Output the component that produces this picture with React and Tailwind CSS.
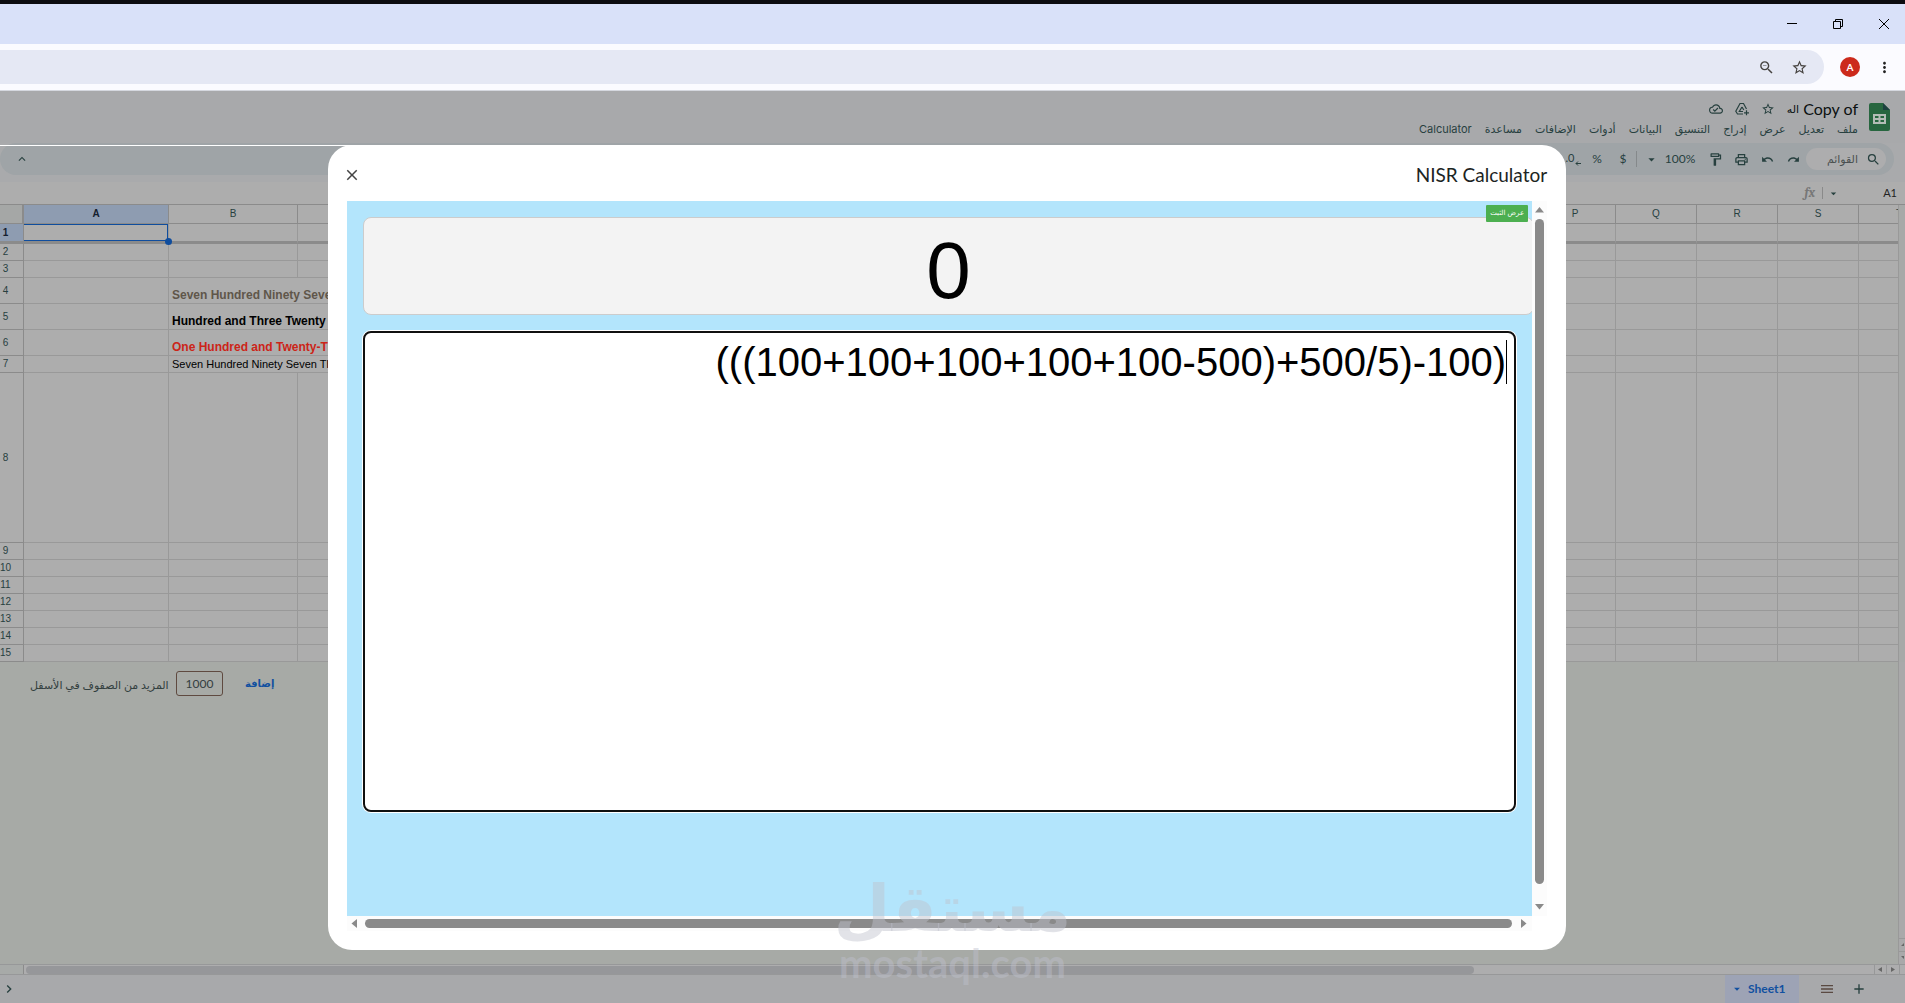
import { MdZoomOut, MdStarBorder, MdOutlineCloudDone, MdSearch, MdRedo, MdUndo, MdOutlinePrint, MdOutlineFormatPaint, MdMoreVert, MdArrowDropDown, MdAdd, MdMenu, MdClose, MdKeyboardArrowUp, MdKeyboardArrowRight } from "react-icons/md";

const MENUS = ["ملف", "تعديل", "عرض", "إدراج", "التنسيق", "البيانات", "أدوات", "الإضافات", "مساعدة", "Calculator"];
const COLUMNS = ["A", "B", "C", "D", "E", "F", "G", "H", "I", "J", "K", "L", "M", "N", "O", "P", "Q", "R", "S", "T"];

const COLUMN_WIDTHS = { A: "w-[145px]", B: "w-[129px]", C: "" };

const ROWS = [
    { id: 1, height: "h-5" },
    { id: 2, height: "h-[17px]" },
    { id: 3, height: "h-[17px]" },
    { id: 4, height: "h-[26px]", text: "Seven Hundred Ninety Seven Thousand", style: "text-[12px] font-bold text-[#5f564a]" },
    { id: 5, height: "h-[26px]", text: "Hundred and Three Twenty Million", style: "text-[12px] font-bold text-black" },
    { id: 6, height: "h-[26px]", text: "One Hundred and Twenty-Three", style: "text-[12px] font-bold text-[#cc2418]" },
    { id: 7, height: "h-[17px]", text: "Seven Hundred Ninety Seven Thousand", style: "text-[11px] text-black" },
    { id: 8, height: "h-[170px]" },
    { id: 9, height: "h-[17px]" },
    { id: 10, height: "h-[17px]" },
    { id: 11, height: "h-[17px]" },
    { id: 12, height: "h-[17px]" },
    { id: 13, height: "h-[17px]" },
    { id: 14, height: "h-[17px]" },
    { id: 15, height: "h-[17px]" },
];

function BrowserBar() {
    return (
        <div className="border-t-4 border-[#0c0c10]">
            <div className="flex h-10 items-center justify-end gap-9 bg-[#d9e1f9] pr-4 text-black">
                <button aria-label="Minimize">
                    <svg width="10" height="10" viewBox="0 0 10 10" stroke="currentColor" fill="none"><path d="M0 4.5h10" /></svg>
                </button>
                <button aria-label="Restore">
                    <svg width="10" height="10" viewBox="0 0 10 10" stroke="currentColor" fill="none"><path d="M.5 2.5h7v7h-7zM2.5 2.5v-2h7v7h-2" /></svg>
                </button>
                <button aria-label="Close window">
                    <svg width="10" height="10" viewBox="0 0 10 10" stroke="currentColor" fill="none"><path d="M0 0l10 10M10 0L0 10" /></svg>
                </button>
            </div>
            <div className="flex h-[47px] items-center border-b border-[#d5d8df] bg-[#fbfbff] pr-3 text-[#45423f]">
                <div className="flex h-[34px] flex-1 items-center justify-end gap-4 rounded-r-full bg-[#e5e8f4] pr-4">
                    <button aria-label="Zoom"><MdZoomOut size={17} /></button>
                    <button aria-label="Bookmark"><MdStarBorder size={17} /></button>
                </div>
                <button aria-label="Profile" className="ml-4 h-5 w-5 rounded-full bg-[#cc2a1c] text-[10px] font-bold text-white">A</button>
                <button aria-label="More" className="ml-4 text-[#222]"><MdMoreVert size={17} /></button>
            </div>
        </div>
    );
}

function SheetsHeader() {
    return (
        <header dir="rtl" className="flex h-[52px] gap-[11px] bg-[#a8a9ab] pt-3 pr-[15px] text-[#27403f]">
            <svg width="21" height="28" viewBox="0 0 21 28">
                <path d="M2 0h12l7 7v19a2 2 0 0 1-2 2H2a2 2 0 0 1-2-2V2a2 2 0 0 1 2-2z" fill="#27663f" />
                <path d="M14 0l7 7h-7z" fill="#1d4040" />
                <path d="M4 11h13v10H4zM6 13v2h3.500v-2zM11.500 13v2H15v-2zM6 17v2h3.500v-2zM11.500 17v2H15v-2z" fill="#b4bcb6" fillRule="evenodd" />
            </svg>
            <div className="-mt-1 flex-1">
                <div className="flex h-5 items-center gap-3">
                    <h1 className="flex gap-1 text-[16px] leading-5 text-[#0b1010]" dir="ltr">
                        <span className="text-[11px]">اله</span>
                        <span>Copy of</span>
                    </h1>
                    <button aria-label="Star"><MdStarBorder size={14} /></button>
                    <button aria-label="Move">
                        <svg width="14" height="14" viewBox="0 0 14 14" fill="none" stroke="currentColor" strokeWidth="1.200">
                            <path d="M8 12H2.500L.8 9.200 5 1.500h3.500l3 5.500M7 5L4.300 9.500H8M7 5l1.800 3M9 10.800h5M11.500 8.300v5" />
                        </svg>
                    </button>
                    <button aria-label="Saved"><MdOutlineCloudDone size={14} /></button>
                </div>
                <nav className="flex h-5 items-center gap-[13px] font-['Inter','DejaVu_Sans',sans-serif] text-[11px]">
                    {MENUS.map((item) => (
                        <button key={item}>{item}</button>
                    ))}
                </nav>
            </div>
        </header>
    );
}

function ToolButton({ label, children }) {
    return (
        <button aria-label={label} className="flex w-[26px] justify-center text-[12px]">
            {children}
        </button>
    );
}

function Toolbar() {
    return (
        <div className="bg-[#a9aaac] pb-[7px]">
            <div dir="rtl" className="mr-[11px] flex h-8 items-center rounded-full bg-[#9fa4a7] pr-2 text-[#27403f]">
                <label className="flex h-[22px] w-20 items-center gap-2 rounded-full bg-[#adadae] pr-[5px]">
                    <MdSearch size={15} className="shrink-0" />
                    <input aria-label="القوائم" className="w-12 min-w-0 bg-transparent text-[11px] placeholder:text-[#4a5050] placeholder:opacity-100" placeholder="القوائم" />
                </label>
                <ToolButton label="Redo"><MdRedo size={13} /></ToolButton>
                <ToolButton label="Undo"><MdUndo size={13} /></ToolButton>
                <ToolButton label="Print"><MdOutlinePrint size={15} /></ToolButton>
                <ToolButton label="Paint format"><MdOutlineFormatPaint size={15} /></ToolButton>
                <button className="flex w-[65px] items-center justify-center gap-[6px] text-[12px]">
                    <span dir="ltr">100%</span>
                    <MdArrowDropDown size={15} />
                </button>
                <span className="h-4 w-px bg-[#85898b]"></span>
                <ToolButton label="Currency">$</ToolButton>
                <ToolButton label="Percent">%</ToolButton>
                <ToolButton label="Fewer decimals">
                    <span dir="ltr" className="text-[11px] leading-3">.0</span>
                    <svg width="6" height="14" viewBox="0 0 6 14" className="-mr-1 order-first" stroke="currentColor" fill="none"><path d="M6 11.500H1M3 9.500l-2 2 2 2" /></svg>
                </ToolButton>
                <button aria-label="Collapse" className="mr-auto ml-[15px]"><MdKeyboardArrowUp size={14} /></button>
            </div>
        </div>
    );
}

function FormulaBar() {
    return (
        <div dir="rtl" className="flex h-[22px] items-center bg-[#adadad] pr-2 text-[11px]">
            <span className="w-[57px] text-[#222]">A1</span>
            <MdArrowDropDown size={13} className="text-[#27403f]" />
            <span className="mr-1 h-3 w-px bg-[#8a8a8a]"></span>
            <em className="mr-[7px] font-serif text-[13px] font-bold text-[#777]">fx</em>
        </div>
    );
}

function Grid() {
    return (
        <div className="flex border-t border-[#8b8b8b]">
            <div className="min-w-0 flex-1 overflow-hidden border-r border-[#999]">
                <table className="w-[calc(100%+42px)] table-fixed border-separate border-spacing-0 bg-[#adadad] font-['Liberation_Sans',Arial,sans-serif] text-[10px] leading-3 text-[#27403f]">
                    <colgroup>
                        <col className="w-6" />
                        {COLUMNS.map((name) => (
                            <col key={name} className={COLUMN_WIDTHS[name] ?? "w-[81px]"} />
                        ))}
                    </colgroup>
                    <thead>
                        <tr className="h-[19px]">
                            <th aria-label="Select all" className="border-r-2 border-b border-[#8b8b8b] bg-[#a5a7a6] p-0"></th>
                            {COLUMNS.map((name) => (
                                <th
                                    key={name}
                                    className={`border-r border-b border-[#8b8b8b] p-0 ${name === "A" ? "bg-[#8e9cb1] font-bold text-[#15202e]" : "font-normal"}`}
                                >
                                    {name}
                                </th>
                            ))}
                        </tr>
                    </thead>
                    <tbody>
                        {ROWS.map((row) => (
                            <tr key={row.id} className={row.height}>
                                <th
                                    className={`border-r border-[#8b8b8b] p-0 pr-3 ${row.id === 1 ? "border-b-3 bg-[#8e9cb1] font-bold text-[#15202e]" : "border-b font-normal"}`}
                                >
                                    {row.id}
                                </th>
                                {COLUMNS.map((name) => {
                                    if (row.id === 1) {
                                        return (
                                            <td key={name} className={`border-r border-b-3 border-r-[#999] border-b-[#8b8b8b] p-0 ${name === "A" ? "relative" : ""}`}>
                                                {name === "A" && (
                                                    <>
                                                        <span className="absolute inset-0 border border-l-0 border-[#0f4d9e]"></span>
                                                        <span className="absolute -right-1 -bottom-1 z-10 h-[7px] w-[7px] rounded-full bg-[#0f4d9e]"></span>
                                                    </>
                                                )}
                                            </td>
                                        );
                                    }
                                    if (name === "B" && row.text) {
                                        return (
                                            <td key={name} className={`border-b border-[#999] p-0 pl-[3px] align-bottom whitespace-nowrap ${row.style}`}>
                                                <div className="w-0 leading-4">{row.text}</div>
                                            </td>
                                        );
                                    }
                                    return <td key={name} className="border-r border-b border-[#999] p-0"></td>;
                                })}
                            </tr>
                        ))}
                    </tbody>
                </table>
            </div>
            <div className="w-[6px] bg-[#a7a9a8]"></div>
        </div>
    );
}

function AddRows() {
    return (
        <div className="flex flex-1">
            <div className="flex-1 border-r border-[#999] pt-[9px] pl-[30px]">
                <div className="flex h-[25px] items-center text-[11px] text-[#33403f]">
                    <label htmlFor="row-count" dir="rtl" className="w-[146px] pt-1 pr-1 text-left">المزيد من الصفوف في الأسفل</label>
                    <input id="row-count" defaultValue="1000" className="h-[25px] w-[47px] rounded-[3px] border border-[#5f4a40] text-center text-[12px]" />
                    <button className="ml-[22px] text-[10px] font-bold text-[#1150a0]">إضافة</button>
                </div>
            </div>
            <div className="flex w-[6px] flex-col justify-end bg-[#a9a9aa] text-[#666]">
                <svg width="6" height="26" viewBox="0 0 6 26"><path d="M0 .5h6M0 13.500h6" stroke="#999" /><path d="M2 8l3-3v3zM2 18h3v3z" fill="currentColor" /></svg>
            </div>
        </div>
    );
}

function SheetTabs() {
    return (
        <footer>
            <div className="flex h-[11px] items-center border-y border-[#979899] bg-[#adadae]">
                <span className="h-full w-6 border-r border-[#8b8b8b] bg-[#a7aaa8]"></span>
                <span className="ml-[2px] h-[8px] w-[76%] rounded-full bg-[#96979a]"></span>
                <svg width="32" height="9" viewBox="0 0 32 9" className="ml-auto"><path d="M1.500 0v9M13.500 0v9M26.500 0v9" stroke="#979899" /><path d="M9 2v5L5 4.500zM18 2v5l4-2.500z" fill="#666" /></svg>
            </div>
            <div dir="rtl" className="flex h-7 items-center bg-[#a8a9ab] pr-[38px] text-[#27403f]">
                <button aria-label="Add sheet"><MdAdd size={16} /></button>
                <button aria-label="All sheets" className="mr-4 ml-5 text-[#5a4a42]"><MdMenu size={16} /></button>
                <button dir="ltr" className="flex h-full w-[74px] items-center gap-1 bg-[#9da3b5] pl-[5px] text-[12px] font-bold text-[#1150a0]">
                    <MdArrowDropDown size={14} />
                    Sheet1
                </button>
                <button aria-label="Scroll tabs" className="mr-auto ml-[1px]"><MdKeyboardArrowRight size={16} /></button>
            </div>
        </footer>
    );
}

function CalculatorDialog() {
    return (
        <div role="dialog" aria-label="NISR Calculator" className="relative flex w-[65vw] flex-col rounded-3xl bg-white px-[19px] pb-[19px]">
            <div className="flex h-14 items-center justify-between pt-1">
                <button aria-label="Close" className="text-[#444]"><MdClose size={18} className="-ml-1" /></button>
                <h2 className="text-[19px] text-[#1c2423]">NISR Calculator</h2>
            </div>
            <div className="flex min-h-0 flex-1">
                <div className="relative min-w-0 flex-1 overflow-hidden bg-[#b3e5fc] pt-4 pl-4 font-['Liberation_Sans',Arial,sans-serif] text-black">
                    <output className="-mr-[2px] flex h-[98px] items-center justify-center rounded-lg border border-[#ccc] bg-[#f3f3f3] text-[80px] leading-none">
                        <span className="pt-[10px]">0</span>
                    </output>
                    <div className="relative mt-4 mr-4 flex h-[481px]">
                        <textarea
                            aria-label="Expression"
                            dir="ltr"
                            className="w-full resize-none rounded-lg border-2 border-[#101010] bg-white pt-[6px] pr-[8px] text-right text-[40px] leading-[46px] ring-1 ring-white outline-none"
                            defaultValue="(((100+100+100+100+100-500)+500/5)-100)"
                        />
                        <span className="absolute top-[9px] right-[9px] h-11 w-px bg-black"></span>
                    </div>
                    <button className="absolute top-1 right-1 h-[17px] w-[42px] rounded-[1px] bg-[#4caf50] font-['DejaVu_Sans',sans-serif] text-[7px] leading-none whitespace-nowrap text-white">عرض الثبت</button>
                </div>
                <div className="flex w-[15px] flex-col items-center bg-[#fcfcfc] text-[#8a8a8a]">
                    <svg width="9" height="18" viewBox="0 0 9 18"><path d="M0 11.500L4.500 6 9 11.500z" fill="currentColor" /></svg>
                    <div className="w-[9px] flex-1 rounded-full bg-current"></div>
                    <svg width="9" height="32" viewBox="0 0 9 32"><path d="M0 20l4.500 5.500L9 20z" fill="currentColor" /></svg>
                </div>
            </div>
            <div className="mr-[15px] flex h-[15px] items-center bg-[#fcfcfc] text-[#8a8a8a]">
                <svg width="18" height="9" viewBox="0 0 18 9"><path d="M10 0v9L4.500 4.500z" fill="currentColor" /></svg>
                <div className="h-[9px] flex-1 rounded-full bg-current"></div>
                <svg width="20" height="9" viewBox="0 0 20 9"><path d="M9 0v9l5.500-4.500z" fill="currentColor" /></svg>
            </div>
        </div>
    );
}

function Watermark() {
    return (
        <div className="pointer-events-none absolute inset-x-0 bottom-6 flex flex-col items-center font-['DejaVu_Sans',sans-serif] font-bold text-[#bec0cd]/45">
            <span className="text-[65px] leading-[76px]">مستقل</span>
            <span className="font-['Lato',sans-serif] text-[40px] leading-8">mostaql.com</span>
        </div>
    );
}

export default function App() {
    return (
        <div className="relative flex min-h-screen flex-col bg-[#a7aaa6] font-['Lato','DejaVu_Sans',sans-serif]">
            <BrowserBar />
            <SheetsHeader />
            <Toolbar />
            <FormulaBar />
            <Grid />
            <AddRows />
            <SheetTabs />
            <div className="absolute inset-x-0 top-[145px] bottom-[53px] flex justify-center pr-[11px]">
                <span className="absolute top-0 left-0 h-px w-[53%] bg-white"></span>
                <CalculatorDialog />
            </div>
            <Watermark />
        </div>
    );
}
